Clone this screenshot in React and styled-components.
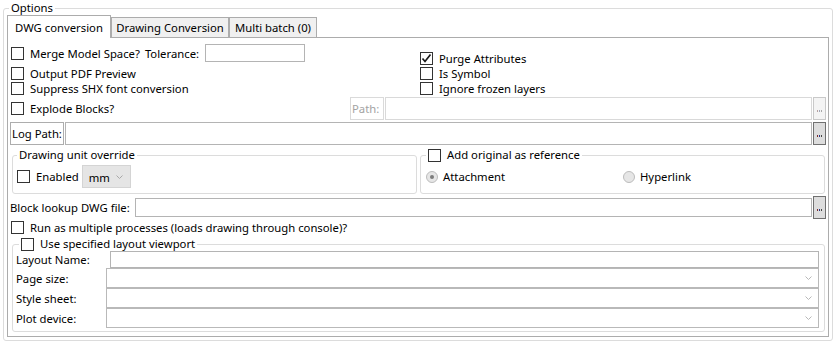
import React from "react";
import styled, { createGlobalStyle } from "styled-components";

const GlobalStyle = createGlobalStyle`
  body {
    margin: 0;
    background: #ffffff;
    color: #000000;
    font-family: "Noto Sans", "Open Sans", sans-serif;
    font-size: 11.3px;
  }
  * {
    box-sizing: border-box;
  }
`;

const Page = styled.div`
  width: 837px;
  height: 344px;
  padding: 1px 4px 0 3px;
`;

const Group = styled.fieldset`
  margin: ${(p) => p.$margin || "0"};
  min-width: 0;
  padding: ${(p) => p.$pad || "0 3px 3px 3px"};
  border: 1px solid #dcdcdc;
  border-radius: 3px;
`;

const Legend = styled.legend`
  height: 14px;
  line-height: 14px;
  margin-left: ${(p) => p.$indent || 0}px;
  padding: 0 2px;
`;

const LegendInner = styled.span`
  display: inline-flex;
  align-items: center;
  gap: 6px;
  height: 14px;
`;

const TabStrip = styled.div`
  display: flex;
  align-items: flex-end;
  height: 23px;
  margin-bottom: -1px;
  position: relative;
  z-index: 1;
`;

const Tab = styled.div`
  width: ${(p) => p.$w}px;
  height: ${(p) => (p.$active ? 23 : 21)}px;
  display: flex;
  align-items: center;
  justify-content: center;
  border: 1px solid #acacac;
  border-bottom: ${(p) => (p.$active ? "none" : "1px solid #acacac")};
  background: ${(p) => (p.$active ? "#ffffff" : "#f0f0f0")};
  white-space: nowrap;
`;

const TabPanel = styled.div`
  height: 300px;
  border: 1px solid #acacac;
  background: #ffffff;
  padding: 0 2px;
  display: flex;
  flex-direction: column;
`;

const TopGrid = styled.div`
  display: grid;
  grid-template-columns: 410px 1fr;
  height: 58px;
`;

const Column = styled.div`
  display: flex;
  flex-direction: column;
  padding-top: ${(p) => p.$top}px;
`;

const CheckRow = styled.div`
  display: flex;
  align-items: center;
  flex: ${(p) => (p.$w ? `0 0 ${p.$w}px` : "none")};
  height: ${(p) => p.$h || 15}px;
  margin-left: ${(p) => p.$indent ?? 1}px;
  margin-top: ${(p) => p.$gap || 0}px;
  gap: 6px;
  white-space: nowrap;
`;

const Box = styled.span`
  width: 13px;
  height: 13px;
  flex: none;
  border: 1px solid #333333;
  background: #ffffff;
  display: inline-flex;
  align-items: center;
  justify-content: center;
`;

const Text = styled.span`
  margin-left: ${(p) => p.$ml || 0}px;
  white-space: nowrap;
`;

const FieldRow = styled.div`
  display: flex;
  align-items: center;
  gap: 1px;
  height: ${(p) => p.$h || 23}px;
  margin-top: ${(p) => p.$gap || 0}px;
`;

const BoxLabel = styled.div`
  width: ${(p) => p.$w}px;
  height: 100%;
  flex: none;
  display: flex;
  align-items: center;
  padding-left: 1px;
  border: 1px solid ${(p) => (p.$disabled ? "#dadada" : "#adadad")};
  color: ${(p) => (p.$disabled ? "#a3a3a3" : "#000000")};
  white-space: nowrap;
  overflow: hidden;
`;

const Input = styled.input`
  display: block;
  width: ${(p) => (p.$w ? `${p.$w}px` : "auto")};
  flex: ${(p) => (p.$w ? "none" : "1")};
  min-width: 0;
  height: ${(p) => p.$h || 23}px;
  margin: 0 0 0 ${(p) => p.$ml || 0}px;
  padding: 0 2px;
  border: 1px solid ${(p) => (p.$disabled ? "#d9d9d9" : "#b4b4b4")};
  background: #ffffff;
  font: inherit;
  outline: none;
`;

const DotsButton = styled.button`
  width: 13px;
  height: 23px;
  flex: none;
  margin: 0;
  padding: 0;
  border: 1px solid ${(p) => (p.$disabled ? "#c9c9c9" : "#707070")};
  background: ${(p) => (p.$disabled ? "#f4f4f4" : "#dddddd")};
  display: flex;
  align-items: center;
  justify-content: center;
  gap: 1px;
  padding-top: 5px;
`;

const Dot = styled.span`
  width: 1px;
  height: 2px;
  background: ${(p) => p.$c};
`;

const GroupsRow = styled.div`
  display: grid;
  grid-template-columns: 1fr 1fr;
  gap: 3px;
  margin: 3px 1px 0 2px;
`;

const InlineRow = styled.div`
  display: flex;
  align-items: center;
  height: 23px;
`;

const UnitCombo = styled.div`
  width: 49px;
  height: 23px;
  margin-left: 3px;
  display: flex;
  align-items: center;
  justify-content: space-between;
  padding: 1px 7px 0 6px;
  background: #e5e5e5;
  border: 1px solid #d4d4d4;
`;

const RadioGrid = styled.div`
  display: grid;
  grid-template-columns: 197px 1fr;
  align-items: center;
  height: 23px;
`;

const RadioOption = styled.div`
  display: flex;
  align-items: center;
  gap: 5px;
`;

const Radio = styled.span`
  width: 12px;
  height: 12px;
  flex: none;
  border-radius: 50%;
  border: 1px solid #bcbcbc;
  background: #e6e6e6;
  display: inline-flex;
  align-items: center;
  justify-content: center;

  &::after {
    content: "";
    width: 4px;
    height: 4px;
    border-radius: 50%;
    background: ${(p) => (p.$on ? "#7d7d7d" : "transparent")};
  }
`;

const PlainLabel = styled.div`
  width: ${(p) => p.$w}px;
  flex: none;
  white-space: nowrap;
`;

const FormGrid = styled.div`
  display: grid;
  grid-template-columns: 90px 1fr;
  grid-template-rows: 17px 20px 20px 20px;
  align-items: center;
`;

const Combo = styled.div`
  height: 20px;
  border: 1px solid #b9b9b9;
  background: #ffffff;
  display: flex;
  align-items: center;
  justify-content: flex-end;
  padding-right: 6px;
`;

const Chevron = ({ color = "#b8b8b8" }) => (
  <svg width="7" height="4" viewBox="0 0 7 4">
    <polyline points="0.5,0.5 3.5,3.5 6.5,0.5" fill="none" stroke={color} strokeWidth="1" />
  </svg>
);

const CheckBox = ({ checked }) => (
  <Box>
    {checked && (
      <svg width="11" height="11" viewBox="0 0 11 11">
        <polyline points="1.5,5.5 4,8.5 9.5,1.5" fill="none" stroke="#1a1a1a" strokeWidth="1.7" />
      </svg>
    )}
  </Box>
);

const Ellipsis = ({ disabled }) => (
  <DotsButton $disabled={disabled} aria-label="...">
    {(disabled ? ["#b5a0a0", "#a0a6b8", "#a8a8a8"] : ["#7a2a2a", "#2a3a8a", "#444444"]).map((c, i) => (
      <Dot key={i} $c={c} />
    ))}
  </DotsButton>
);

export default function App() {
  return (
    <Page>
      <GlobalStyle />
      <Group $pad="0 3px 3px 3px">
        <Legend $indent={2}>Options</Legend>
        <TabStrip>
          <Tab $active $w={104}>DWG conversion</Tab>
          <Tab $w={118}>Drawing Conversion</Tab>
          <Tab $w={88}>Multi batch (0)</Tab>
        </TabStrip>
        <TabPanel>
          <TopGrid>
            <Column $top={6}>
              <CheckRow $h={18}>
                <CheckBox />
                <Text>Merge Model Space?</Text>
                <Text $ml={-1}>Tolerance:</Text>
                <Input $w={100} $h={18} readOnly />
              </CheckRow>
              <CheckRow $gap={4}>
                <CheckBox />
                <Text>Output PDF Preview</Text>
              </CheckRow>
              <CheckRow>
                <CheckBox />
                <Text>Suppress SHX font conversion</Text>
              </CheckRow>
            </Column>
            <Column $top={13}>
              <CheckRow $indent={0}>
                <CheckBox checked />
                <Text>Purge Attributes</Text>
              </CheckRow>
              <CheckRow $indent={0}>
                <CheckBox />
                <Text>Is Symbol</Text>
              </CheckRow>
              <CheckRow $indent={0}>
                <CheckBox />
                <Text>Ignore frozen layers</Text>
              </CheckRow>
            </Column>
          </TopGrid>

          <FieldRow $gap={1}>
            <CheckRow $w={338} $h={23}>
              <CheckBox />
              <Text>Explode Blocks?</Text>
            </CheckRow>
            <BoxLabel $w={34} $disabled>Path:</BoxLabel>
            <Input $disabled readOnly />
            <Ellipsis disabled />
          </FieldRow>

          <FieldRow $gap={2}>
            <BoxLabel $w={54}>Log Path:</BoxLabel>
            <Input readOnly />
            <Ellipsis />
          </FieldRow>

          <GroupsRow>
            <Group $pad="3px 4px 5px 4px">
              <Legend>Drawing unit override</Legend>
              <InlineRow>
                <CheckBox />
                <Text $ml={6}>Enabled</Text>
                <UnitCombo>
                  <span>mm</span>
                  <Chevron color="#a8a8a8" />
                </UnitCombo>
              </InlineRow>
            </Group>
            <Group $pad="3px 5px 5px 5px">
              <Legend>
                <LegendInner>
                  <CheckBox />
                  <span>Add original as reference</span>
                </LegendInner>
              </Legend>
              <RadioGrid>
                <RadioOption>
                  <Radio $on />
                  <span>Attachment</span>
                </RadioOption>
                <RadioOption>
                  <Radio />
                  <span>Hyperlink</span>
                </RadioOption>
              </RadioGrid>
            </Group>
          </GroupsRow>

          <FieldRow $gap={2}>
            <PlainLabel $w={124}>Block lookup DWG file:</PlainLabel>
            <Input $h={19} readOnly />
            <Ellipsis />
          </FieldRow>

          <CheckRow $gap={1}>
            <CheckBox />
            <Text>Run as multiple processes (loads drawing through console)?</Text>
          </CheckRow>

          <Group $margin="2px 1px 0 2px" $pad="0 5px 3px 3px">
            <Legend $indent={3}>
              <LegendInner>
                <CheckBox />
                <span>Use specified layout viewport</span>
              </LegendInner>
            </Legend>
            <FormGrid>
              <span>Layout Name:</span>
              <Input $h={17} $ml={4} readOnly />
              <span>Page size:</span>
              <Combo>
                <Chevron />
              </Combo>
              <span>Style sheet:</span>
              <Combo>
                <Chevron />
              </Combo>
              <span>Plot device:</span>
              <Combo>
                <Chevron />
              </Combo>
            </FormGrid>
          </Group>
        </TabPanel>
      </Group>
    </Page>
  );
}
